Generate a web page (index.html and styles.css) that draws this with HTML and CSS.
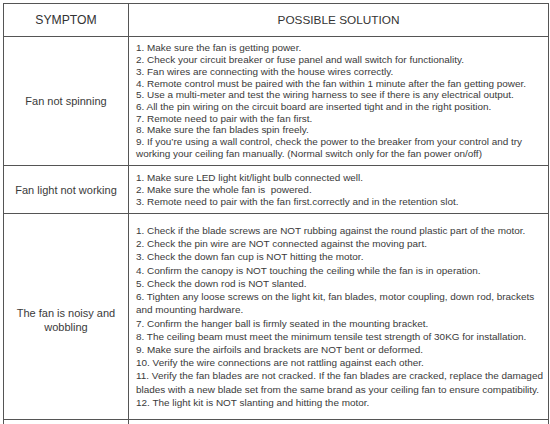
FILE: index.html
```html
<!DOCTYPE html>
<html lang="en">
<head>
<meta charset="utf-8">
<title>Troubleshooting</title>
<link rel="stylesheet" href="styles.css">
</head>
<body>
<div class="page">
  <div class="table">
    <div class="cell head sym">SYMPTOM</div>
    <div class="cell head sol-head">POSSIBLE SOLUTION</div>

    <div class="cell sym r1">Fan not spinning</div>
    <div class="cell sol r1">
      <div>1. Make sure the fan is getting power.</div>
      <div>2. Check your circuit breaker or fuse panel and wall switch for functionality.</div>
      <div>3. Fan wires are connecting with the house wires correctly.</div>
      <div>4. Remote control must be paired with the fan within 1 minute after the fan getting power.</div>
      <div>5. Use a multi-meter and test the wiring harness to see if there is any electrical output.</div>
      <div>6. All the pin wiring on the circuit board are inserted tight and in the right position.</div>
      <div>7. Remote need to pair with the fan first.</div>
      <div>8. Make sure the fan blades spin freely.</div>
      <div>9. If you’re using a wall control, check the power to the breaker from your control and try<br>working your ceiling fan manually. (Normal switch only for the fan power on/off)</div>
    </div>

    <div class="cell sym r2">Fan light not working</div>
    <div class="cell sol r2">
      <div>1. Make sure LED light kit/light bulb connected well.</div>
      <div>2. Make sure the whole fan is &nbsp;powered.</div>
      <div>3. Remote need to pair with the fan first.correctly and in the retention slot.</div>
    </div>

    <div class="cell sym r3">The fan is noisy and<br>wobbling</div>
    <div class="cell sol r3">
      <div>1. Check if the blade screws are NOT rubbing against the round plastic part of the motor.</div>
      <div>2. Check the pin wire are NOT connected against the moving part.</div>
      <div>3. Check the down fan cup is NOT hitting the motor.</div>
      <div>4. Confirm the canopy is NOT touching the ceiling while the fan is in operation.</div>
      <div>5. Check the down rod is NOT slanted.</div>
      <div>6. Tighten any loose screws on the light kit, fan blades, motor coupling, down rod, brackets<br>and mounting hardware.</div>
      <div>7. Confirm the hanger ball is firmly seated in the mounting bracket.</div>
      <div>8. The ceiling beam must meet the minimum tensile test strength of 30KG for installation.</div>
      <div>9. Make sure the airfoils and brackets are NOT bent or deformed.</div>
      <div>10. Verify the wire connections are not rattling against each other.</div>
      <div>11. Verify the fan blades are not cracked. If the fan blades are cracked, replace the damaged<br>blades with a new blade set from the same brand as your ceiling fan to ensure compatibility.</div>
      <div>12. The light kit is NOT slanting and hitting the motor.</div>
    </div>

    <div class="cell sym r4"></div>
    <div class="cell sol r4"></div>
  </div>
</div>
</body>
</html>
```

FILE: styles.css
```css
html, body {
  margin: 0;
  padding: 0;
  background: #ffffff;
  overflow: hidden;
}

.page {
  padding: 3px 0 0 3px;
  font-family: "Liberation Sans", Arial, sans-serif;
  color: #3a3a3a;
}

.table {
  display: grid;
  grid-template-columns: 125px 420px;
  grid-template-rows: 33px 129px 48px 206px 60px;
  border-top: 1px solid #555;
  border-left: 1px solid #555;
  width: 545px;
}

.cell {
  border-right: 1px solid #555;
  border-bottom: 1px solid #555;
  box-sizing: border-box;
}

.head {
  display: flex;
  align-items: center;
  font-size: 11.8px;
  color: #333;
}

.sym {
  display: flex;
  align-items: center;
  justify-content: center;
  text-align: center;
  font-size: 11px;
  line-height: 14px;
}

.head.sym {
  font-size: 12.2px;
}

.sym.r3 {
  padding-top: 6px;
}

.sol-head {
  justify-content: center;
}

.sol {
  display: flex;
  flex-direction: column;
  justify-content: center;
  padding: 0 2px 0 7px;
  font-size: 9.95px;
  white-space: nowrap;
}

.sol.r1 { line-height: 11.7px; }
.sol.r2 { line-height: 12px; }
.sol.r3 { line-height: 13.2px; }
```
